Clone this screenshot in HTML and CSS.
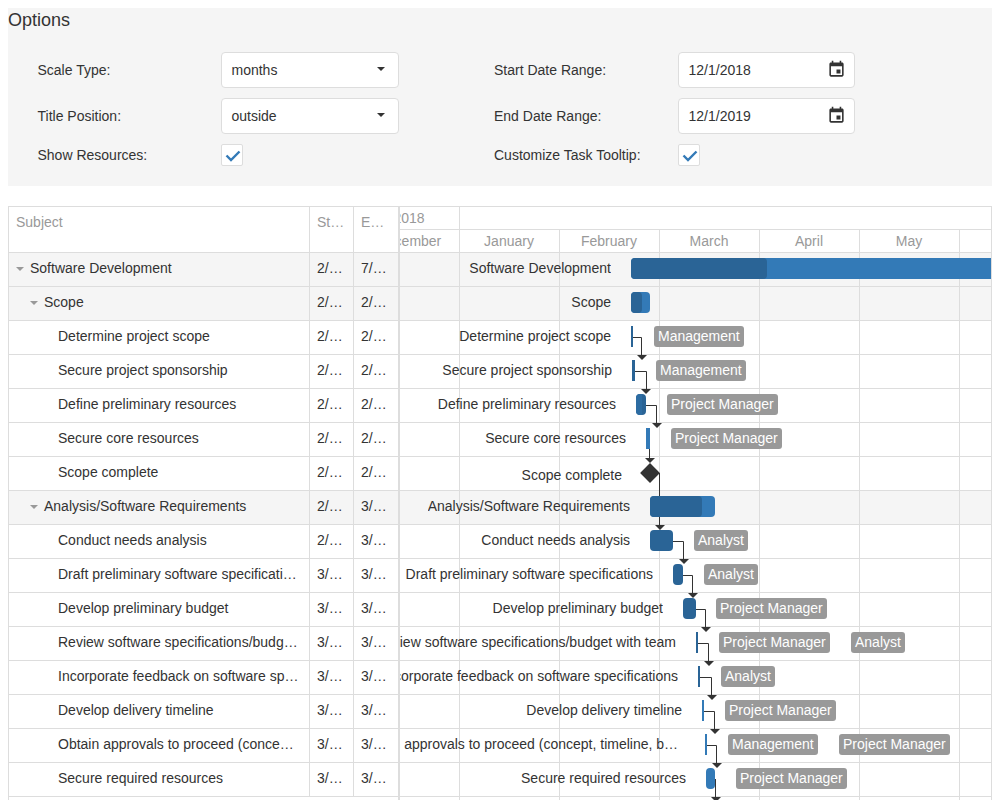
FILE: index.html
```html
<!DOCTYPE html>
<html lang="en">
  <head>
    <meta charset="UTF-8" />
    <title>Gantt Options</title>
    <link rel="stylesheet" href="styles.css">
  </head>
  <body>
    <div class="options">
      <div class="options-caption">Options</div>
      <div class="options-grid">
        <div class="option-label">Scale Type:</div>
        <div class="field">months<span class="caret"></span></div>
        <div></div>
        <div class="option-label">Start Date Range:</div>
        <div class="field">12/1/2018
          <svg class="calendar" viewBox="0 0 24 24"><path d="M17 12h-5v5h5v-5zM16 1v2H8V1H6v2H5c-1.11 0-1.99.9-1.99 2L3 19c0 1.1.89 2 2 2h14c1.1 0 2-.9 2-2V5c0-1.1-.9-2-2-2h-1V1h-2zm3 18H5V8h14v11z"/></svg>
        </div>

        <div class="option-label">Title Position:</div>
        <div class="field">outside<span class="caret"></span></div>
        <div></div>
        <div class="option-label">End Date Range:</div>
        <div class="field">12/1/2019
          <svg class="calendar" viewBox="0 0 24 24"><path d="M17 12h-5v5h5v-5zM16 1v2H8V1H6v2H5c-1.11 0-1.99.9-1.99 2L3 19c0 1.1.89 2 2 2h14c1.1 0 2-.9 2-2V5c0-1.1-.9-2-2-2h-1V1h-2zm3 18H5V8h14v11z"/></svg>
        </div>

        <div class="option-label">Show Resources:</div>
        <div class="checkbox"><svg viewBox="0 0 20 20"><path d="M4.5 10.5L9 15l8.5-8.5"/></svg></div>
        <div></div>
        <div class="option-label">Customize Task Tooltip:</div>
        <div class="checkbox"><svg viewBox="0 0 20 20"><path d="M4.5 10.5L9 15l8.5-8.5"/></svg></div>
      </div>
    </div>

    <div class="gantt">
      <div class="tree">
        <div class="tree-head">
          <div class="cell col-subject">Subject</div>
          <div class="cell col-date">Start Date</div>
          <div class="cell col-date">End Date</div>
        </div>
        <div class="tree-row summary">
          <div class="cell col-subject"><span class="toggle"></span>Software Development</div>
          <div class="cell col-date">2/21/2019</div><div class="cell col-date">7/4/2019</div>
        </div>
        <div class="tree-row summary">
          <div class="cell col-subject level-1"><span class="toggle"></span>Scope</div>
          <div class="cell col-date">2/21/2019</div><div class="cell col-date">2/26/2019</div>
        </div>
        <div class="tree-row">
          <div class="cell col-subject level-2">Determine project scope</div>
          <div class="cell col-date">2/21/2019</div><div class="cell col-date">2/21/2019</div>
        </div>
        <div class="tree-row">
          <div class="cell col-subject level-2">Secure project sponsorship</div>
          <div class="cell col-date">2/21/2019</div><div class="cell col-date">2/22/2019</div>
        </div>
        <div class="tree-row">
          <div class="cell col-subject level-2">Define preliminary resources</div>
          <div class="cell col-date">2/22/2019</div><div class="cell col-date">2/25/2019</div>
        </div>
        <div class="tree-row">
          <div class="cell col-subject level-2">Secure core resources</div>
          <div class="cell col-date">2/25/2019</div><div class="cell col-date">2/26/2019</div>
        </div>
        <div class="tree-row">
          <div class="cell col-subject level-2">Scope complete</div>
          <div class="cell col-date">2/26/2019</div><div class="cell col-date">2/26/2019</div>
        </div>
        <div class="tree-row summary">
          <div class="cell col-subject level-1"><span class="toggle"></span>Analysis/Software Requirements</div>
          <div class="cell col-date">2/27/2019</div><div class="cell col-date">3/18/2019</div>
        </div>
        <div class="tree-row">
          <div class="cell col-subject level-2">Conduct needs analysis</div>
          <div class="cell col-date">2/27/2019</div><div class="cell col-date">3/6/2019</div>
        </div>
        <div class="tree-row">
          <div class="cell col-subject level-2">Draft preliminary software specifications</div>
          <div class="cell col-date">3/6/2019</div><div class="cell col-date">3/9/2019</div>
        </div>
        <div class="tree-row">
          <div class="cell col-subject level-2">Develop preliminary budget</div>
          <div class="cell col-date">3/9/2019</div><div class="cell col-date">3/13/2019</div>
        </div>
        <div class="tree-row">
          <div class="cell col-subject level-2">Review software specifications/budget with team</div>
          <div class="cell col-date">3/13/2019</div><div class="cell col-date">3/13/2019</div>
        </div>
        <div class="tree-row">
          <div class="cell col-subject level-2">Incorporate feedback on software specifications</div>
          <div class="cell col-date">3/14/2019</div><div class="cell col-date">3/14/2019</div>
        </div>
        <div class="tree-row">
          <div class="cell col-subject level-2">Develop delivery timeline</div>
          <div class="cell col-date">3/15/2019</div><div class="cell col-date">3/15/2019</div>
        </div>
        <div class="tree-row">
          <div class="cell col-subject level-2">Obtain approvals to proceed (concept, timeline, budget)</div>
          <div class="cell col-date">3/16/2019</div><div class="cell col-date">3/16/2019</div>
        </div>
        <div class="tree-row">
          <div class="cell col-subject level-2">Secure required resources</div>
          <div class="cell col-date">3/16/2019</div><div class="cell col-date">3/19/2019</div>
        </div>
        <div class="tree-row"></div>
      </div>

      <div class="timeline">
        <div class="scale">
          <div class="scale-row">
            <div class="scale-cell">2018</div>
            <div class="scale-cell year-2019"></div>
          </div>
          <div class="scale-row">
            <div class="scale-cell">December</div>
            <div class="scale-cell">January</div>
            <div class="scale-cell">February</div>
            <div class="scale-cell">March</div>
            <div class="scale-cell">April</div>
            <div class="scale-cell">May</div>
            <div class="scale-cell">June</div>
          </div>
        </div>

        <div class="chart">
          <div class="chart-row summary"></div>
          <div class="chart-row summary"></div>
          <div class="chart-row"></div>
          <div class="chart-row"></div>
          <div class="chart-row"></div>
          <div class="chart-row"></div>
          <div class="chart-row"></div>
          <div class="chart-row summary"></div>
          <div class="chart-row"></div>
          <div class="chart-row"></div>
          <div class="chart-row"></div>
          <div class="chart-row"></div>
          <div class="chart-row"></div>
          <div class="chart-row"></div>
          <div class="chart-row"></div>
          <div class="chart-row"></div>
          <div class="chart-row"></div>

          <div class="month-lines">
            <div></div><div></div><div></div><div></div><div></div><div></div><div></div>
          </div>

          <svg class="links" viewBox="400 253 592 547">
            <path d="M633 337.5h8.5V355"/><path d="M637 355h10l-5 5z"/>
            <path d="M635 371.5h11.5V389"/><path d="M641 389h10l-5 5z"/>
            <path d="M646 405.5h10.5V423"/><path d="M652 423h10l-5 5z"/>
            <path d="M649.5 449V458"/><path d="M645 458h10l-5 5z"/>
            <path d="M659.5 473V525"/><path d="M655 525h10l-5 5z"/>
            <path d="M673 541.5h10.5V559"/><path d="M679 559h10l-5 5z"/>
            <path d="M683 575.5h9.5V593"/><path d="M688 593h10l-5 5z"/>
            <path d="M696 609.5h9.5V627"/><path d="M701 627h10l-5 5z"/>
            <path d="M698 643.5h10.5V661"/><path d="M704 661h10l-5 5z"/>
            <path d="M700 677.5h11.5V695"/><path d="M707 695h10l-5 5z"/>
            <path d="M704 711.5h10.5V729"/><path d="M710 729h10l-5 5z"/>
            <path d="M707 745.5h9.5V763"/><path d="M712 763h10l-5 5z"/>
            <path d="M715.5 779V797"/><path d="M711 797h10l-5 5z"/>
          </svg>

          <div class="task" style="left:231px;top:5px;width:420px"><span class="task-title">Software Development</span><div class="task-progress" style="width:136px"></div></div>
          <div class="task" style="left:231px;top:39px;width:19px"><span class="task-title">Scope</span><div class="task-progress" style="width:11px"></div></div>
          <div class="task done thin" style="left:231px;top:73px;width:2px"><span class="task-title">Determine project scope</span></div>
          <div class="task done thin" style="left:232px;top:107px;width:3px"><span class="task-title">Secure project sponsorship</span></div>
          <div class="task done" style="left:236px;top:141px;width:10px"><span class="task-title">Define preliminary resources</span><div class="task-progress soft" style="width:6px"></div></div>
          <div class="task thin" style="left:246px;top:175px;width:4px"><span class="task-title">Secure core resources</span></div>
          <div class="milestone" style="left:240px;top:210px"><span class="task-title">Scope complete</span></div>
          <div class="task" style="left:250px;top:243px;width:65px"><span class="task-title">Analysis/Software Requirements</span><div class="task-progress" style="width:52px"></div></div>
          <div class="task done" style="left:250px;top:277px;width:23px"><span class="task-title">Conduct needs analysis</span></div>
          <div class="task done" style="left:273px;top:311px;width:10px"><span class="task-title">Draft preliminary software specifications</span></div>
          <div class="task done" style="left:283px;top:345px;width:13px"><span class="task-title">Develop preliminary budget</span></div>
          <div class="task done thin" style="left:296px;top:379px;width:2px"><span class="task-title">Review software specifications/budget with team</span></div>
          <div class="task done thin" style="left:298px;top:413px;width:2px"><span class="task-title">Incorporate feedback on software specifications</span></div>
          <div class="task thin" style="left:302px;top:447px;width:2px"><span class="task-title">Develop delivery timeline</span></div>
          <div class="task thin" style="left:305px;top:481px;width:2px"><span class="task-title">Obtain approvals to proceed (concept, timeline, budget)</span></div>
          <div class="task" style="left:306px;top:515px;width:9px"><span class="task-title">Secure required resources</span></div>

          <span class="resource" style="left:254px;top:73px">Management</span>
          <span class="resource" style="left:256px;top:107px">Management</span>
          <span class="resource" style="left:267px;top:141px">Project Manager</span>
          <span class="resource" style="left:271px;top:175px">Project Manager</span>
          <span class="resource" style="left:294px;top:277px">Analyst</span>
          <span class="resource" style="left:304px;top:311px">Analyst</span>
          <span class="resource" style="left:316px;top:345px">Project Manager</span>
          <span class="resource" style="left:319px;top:379px">Project Manager</span>
          <span class="resource" style="left:451px;top:379px">Analyst</span>
          <span class="resource" style="left:321px;top:413px">Analyst</span>
          <span class="resource" style="left:325px;top:447px">Project Manager</span>
          <span class="resource" style="left:328px;top:481px">Management</span>
          <span class="resource" style="left:439px;top:481px">Project Manager</span>
          <span class="resource" style="left:336px;top:515px">Project Manager</span>
        </div>
      </div>
    </div>
  </body>
</html>
```

FILE: styles.css
```css
html {
  overflow: hidden;
}
body {
  margin: 8px 8px 0;
  font-family: "Liberation Sans", Arial, sans-serif;
  font-size: 14px;
  line-height: 20px;
  color: #333;
  background: #fff;
}

/* options panel */
.options {
  background: #f5f5f5;
  padding-bottom: 20px;
}
.options-caption {
  font-size: 18px;
  line-height: 25px;
}
.options-grid {
  display: grid;
  grid-template-columns: 183.5px 178px 95px 184px 177px;
  row-gap: 10px;
  align-items: center;
  margin: 19px 0 0 29.5px;
}
.field {
  position: relative;
  box-sizing: border-box;
  height: 36px;
  padding: 7px 9.5px;
  background: #fff;
  border: 1px solid #ddd;
  border-radius: 4px;
}
.caret {
  position: absolute;
  top: 14px;
  right: 13.5px;
  border-top: 4px solid #333;
  border-left: 4px solid transparent;
  border-right: 4px solid transparent;
}
.calendar {
  position: absolute;
  top: 7px;
  right: 8px;
  width: 19px;
  height: 19px;
  fill: #333;
}
.checkbox {
  box-sizing: border-box;
  width: 22px;
  height: 22px;
  background: #fff;
  border: 1px solid #ddd;
  border-radius: 2px;
}
.checkbox svg {
  display: block;
  width: 20px;
  height: 20px;
  fill: none;
  stroke: #337ab7;
  stroke-width: 2.4;
}

/* gantt */
.gantt {
  display: flex;
  height: 594px;
  margin-top: 20px;
  overflow: hidden;
  border: 1px solid #ddd;
  border-bottom: 0;
  box-sizing: border-box;
}
.tree {
  flex: none;
  width: 389px;
  border-right: 2px solid #ddd;
}
.tree-head,
.tree-row {
  display: flex;
  border-bottom: 1px solid #ddd;
}
.tree-head {
  height: 45px;
  color: #999;
}
.tree-row {
  height: 33px;
}
.cell {
  box-sizing: border-box;
  padding: 5px 7px;
  white-space: nowrap;
  overflow: hidden;
  text-overflow: ellipsis;
  border-right: 1px solid #ddd;
}
.col-subject {
  flex: none;
  width: 301px;
  padding-right: 9px;
}
.col-date {
  flex: none;
  width: 44px;
}
.col-date:last-child {
  border-right: 0;
}
.level-1 {
  padding-left: 21px;
}
.level-2 {
  padding-left: 49px;
}
.toggle {
  display: inline-block;
  width: 8px;
  margin-right: 6px;
  vertical-align: middle;
  border-top: 4px solid #999;
  border-left: 4px solid transparent;
  border-right: 4px solid transparent;
  box-sizing: border-box;
}
.summary {
  background: #f5f5f5;
}

/* timeline */
.timeline {
  flex: 1;
  min-width: 0;
  overflow: hidden;
  position: relative;
}
.scale {
  margin-left: -40px;
  color: #999;
}
.scale-row {
  display: flex;
  height: 22px;
  border-bottom: 1px solid #ddd;
}
.scale-cell {
  flex: none;
  box-sizing: border-box;
  width: 100px;
  padding-right: 1px;
  line-height: 22px;
  text-align: center;
  border-right: 1px solid #ddd;
}
.year-2019 {
  width: 700px;
}
.chart {
  position: relative;
  height: 547px;
}
.chart-row {
  height: 33px;
  border-bottom: 1px solid #ddd;
}
.month-lines {
  position: absolute;
  top: 0;
  bottom: 0;
  left: -40px;
  display: flex;
}
.month-lines div {
  box-sizing: border-box;
  width: 100px;
  border-right: 1px solid #ddd;
}
.links {
  position: absolute;
  top: 0;
  left: 0;
  width: 592px;
  height: 547px;
}
.links path {
  fill: none;
  stroke: #333;
  stroke-width: 1;
}
.links path:nth-child(even) {
  fill: #333;
  stroke: none;
}
.task {
  position: absolute;
  height: 21px;
  border-radius: 4px;
  background: #337ab7;
}
.task.thin {
  border-radius: 0;
}
.task.done {
  background: #2a6496;
}
.task-progress {
  height: 100%;
  border-radius: 4px;
  background: #2a6496;
}
.task-progress.soft {
  border-radius: 4px 0 0 4px;
  background: #2d6ca2;
}
.task-title {
  position: absolute;
  top: 0;
  right: calc(100% + 20px);
  max-width: 326px;
  line-height: 21px;
  white-space: nowrap;
  overflow: hidden;
  text-overflow: ellipsis;
}
.milestone {
  position: absolute;
  width: 20px;
  height: 20px;
}
.milestone::before {
  content: "";
  position: absolute;
  top: 3px;
  left: 3px;
  width: 14px;
  height: 14px;
  background: #333;
  transform: rotate(45deg);
}
.milestone .task-title {
  top: 2px;
  right: calc(100% + 18px);
}
.resource {
  position: absolute;
  height: 21px;
  padding: 0 4px;
  line-height: 21px;
  color: #fff;
  background: #999;
  border-radius: 3px;
  white-space: nowrap;
}
```
